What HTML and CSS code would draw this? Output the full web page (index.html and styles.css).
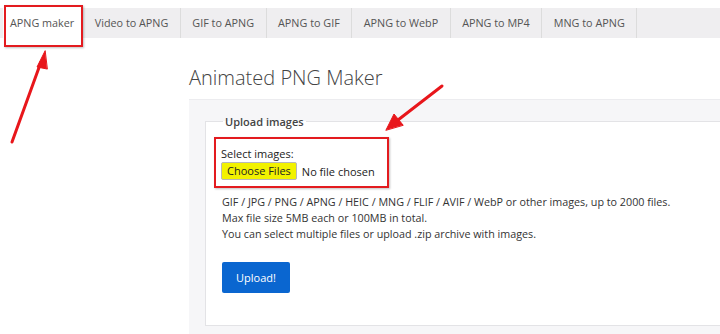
FILE: index.html
```html
<!DOCTYPE html>
<html lang="en">
<head>
    <meta charset="UTF-8">
    <meta name="viewport" content="width=device-width, initial-scale=1.0">
    <title>Animated PNG Maker</title>
    <link rel="stylesheet" href="styles.css">
</head>
<body>
    <div class="topcut"></div>

    <nav class="tabs">
        <a class="tab active" href="#">APNG maker</a>
        <a class="tab" href="#">Video to APNG</a>
        <a class="tab" href="#">GIF to APNG</a>
        <a class="tab" href="#">APNG to GIF</a>
        <a class="tab" href="#">APNG to WebP</a>
        <a class="tab" href="#">APNG to MP4</a>
        <a class="tab" href="#">MNG to APNG</a>
    </nav>

    <main class="content">
        <h1>Animated PNG Maker</h1>

        <div class="panel">
            <fieldset class="upload">
                <legend>Upload images</legend>

                <div class="picker">
                    <div class="picker-label">Select images:</div>
                    <div class="picker-row">
                        <span class="choose">Choose Files</span>
                        <span class="nofile">No file chosen</span>
                    </div>
                </div>

                <p class="info">
                    GIF / JPG / PNG / APNG / HEIC / MNG / FLIF / AVIF / WebP or other images, up to 2000 files.<br>
                    Max file size 5MB each or 100MB in total.<br>
                    You can select multiple files or upload .zip archive with images.
                </p>

                <button class="upload-btn" type="button">Upload!</button>
            </fieldset>
        </div>
    </main>

    <!-- annotations drawn over the screenshot -->
    <div class="mark mark-tab"></div>
    <svg class="arrows" width="720" height="334" viewBox="0 0 720 334">
        <g stroke="#e8161b" stroke-width="3" stroke-linecap="round" fill="#e8161b">
            <line x1="12" y1="142" x2="41" y2="62"/>
            <polygon points="45,51 37,67 47,69" stroke-width="1"/>
            <line x1="442" y1="86" x2="398" y2="120"/>
            <polygon points="386,130 394,114 403,125" stroke-width="1"/>
        </g>
    </svg>
</body>
</html>
```

FILE: styles.css
```css
body {
    margin: 0;
    font-family: "Open Sans", "Noto Sans", Arial, sans-serif;
    color: #333;
    background: #fff;
    position: relative;
    width: 720px;
    height: 334px;
    overflow: hidden;
}
.topcut {
    height: 8px;
}
.tabs {
    display: flex;
    height: 30px;
    background: #efeef0;
}
.tab {
    display: block;
    padding: 0 11.5px;
    line-height: 30px;
    font-size: 10.8px;
    color: #555;
    text-decoration: none;
    border-right: 1px solid #dcdcdc;
}
.tab.active {
    background: #fff;
    margin-left: 3px;
    padding: 0 8px 0 7px;
    height: 37px;
}
.content {
    margin-left: 189px;
}
h1 {
    margin: 28px 0 9px;
    font-size: 20px;
    font-weight: 300;
    color: #444;
    line-height: 24px;
}
.panel {
    background: #f6f6f8;
    padding: 14px 0 8px 16px;
    border-top: 1px solid #ececef;
}
.upload {
    margin: 0;
    background: #fff;
    border: 1px solid #e3e3e6;
    border-right: none;
    padding: 8px 16px 32px 16px;
    min-height: 160px;
}
.upload legend {
    font-size: 11px;
    font-weight: 600;
    color: #444;
    padding: 0 2px;
    margin-left: 1px;
}
.picker {
    display: inline-block;
    border: 2px solid #e31b1f;
    box-shadow: 1px 1px 2px rgba(0, 0, 0, 0.25);
    padding: 8px 12px 6px 5px;
    margin-left: -8px;
    font-size: 11px;
    color: #222;
}
.picker-label {
    line-height: 14px;
}
.picker-row {
    display: flex;
    align-items: center;
    gap: 5px;
    margin-top: 1px;
}
.choose {
    border: 1px solid #b8b8b8;
    border-radius: 2px;
    padding: 1px 5px;
    background: #f2f200;
    line-height: 14px;
}
.info {
    margin: 6px 0 20px;
    font-size: 10.75px;
    line-height: 16px;
    color: #333;
}
.upload-btn {
    background: #0a66d0;
    color: #fff;
    border: none;
    border-radius: 2px;
    font-family: inherit;
    font-size: 11px;
    padding: 0 14px;
    height: 31px;
}
.mark {
    position: absolute;
    border: 2px solid #e31b1f;
    box-shadow: 1px 1px 2px rgba(0, 0, 0, 0.25);
}
.mark-tab {
    left: 4px;
    top: 5px;
    width: 75px;
    height: 38px;
}
.arrows {
    position: absolute;
    left: 0;
    top: 0;
    pointer-events: none;
}
```
